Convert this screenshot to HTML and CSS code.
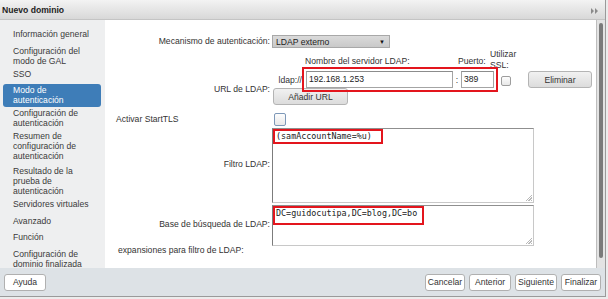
FILE: index.html
```html
<!DOCTYPE html>
<html lang="es">
<head>
  <meta charset="UTF-8" />
  <title>Nuevo dominio</title>
  <link rel="stylesheet" href="styles.css">
</head>
<body>
  <div class="dialog">
    <div class="titlebar">
      <span class="title">Nuevo dominio</span>
      <svg class="collapse" viewBox="0 0 8 6" width="8" height="6">
        <path d="M0 0 L3 3 L0 6 Z M4 0 L7 3 L4 6 Z" fill="#8a8a8a"/>
      </svg>
    </div>

    <div class="main">
      <ul class="nav">
        <li class="single">Información general</li>
        <li>Configuración del<br>modo de GAL</li>
        <li class="single">SSO</li>
        <li class="selected">Modo de<br>autenticación</li>
        <li>Configuración de<br>autenticación</li>
        <li>Resumen de<br>configuración de<br>autenticación</li>
        <li class="shift">Resultado de la<br>prueba de<br>autenticación</li>
        <li class="single">Servidores virtuales</li>
        <li class="single">Avanzado</li>
        <li class="single">Función</li>
        <li>Configuración de<br>dominio finalizada</li>
      </ul>

      <div class="content">
        <div class="form">
          <div class="lbl lbl-mech">Mecanismo de autenticación:</div>
          <div class="ctl">
            <div class="select"><span>LDAP externo</span><span class="caret">&#9660;</span></div>
          </div>

          <div class="lbl lbl-url">URL de LDAP:</div>
          <div class="ctl url">
            <div class="url-head">
              <span class="h-server">Nombre del servidor LDAP:</span>
              <span class="h-port">Puerto:</span>
              <span class="h-ssl">Utilizar<br>SSL:</span>
            </div>
            <div class="url-row">
              <span class="scheme">ldap://</span>
              <div class="hostport">
                <div class="input host">192.168.1.253</div>
                <span class="colon">:</span>
                <div class="input port">389</div>
              </div>
              <span class="check check-ssl"></span>
              <button class="btn btn-remove">Eliminar</button>
            </div>
            <button class="btn btn-add">Añadir URL</button>
          </div>

          <div class="lbl lbl-left">Activar StartTLS</div>
          <div class="ctl"><span class="check check-tls"></span></div>

          <div class="lbl lbl-mid">Filtro LDAP:</div>
          <div class="ctl">
            <div class="textarea ta-filter">
              <span class="mark mark-filter">(samAccountName=%u)</span>
              <span class="grip"></span>
            </div>
          </div>

          <div class="lbl lbl-mid">Base de búsqueda de LDAP:</div>
          <div class="ctl">
            <div class="textarea ta-base">
              <span class="mark mark-base">DC=guidocutipa,DC=blog,DC=bo</span>
              <span class="grip"></span>
            </div>
          </div>

          <div class="wide">expansiones para filtro de LDAP:</div>
        </div>
      </div>

      <div class="scrollbar"><div class="thumb"></div></div>
    </div>

    <div class="footer">
      <button class="btn">Ayuda</button>
      <div class="footer-right">
        <button class="btn btn-cancel">Cancelar</button>
        <button class="btn btn-prev">Anterior</button>
        <button class="btn btn-next">Siguiente</button>
        <button class="btn btn-finish">Finalizar</button>
      </div>
    </div>
  </div>
</body>
</html>
```

FILE: styles.css
```css
body {
  margin: 0;
  padding: 0;
  background: #ececec;
  font-family: 'Liberation Sans', Arial, sans-serif;
  font-size: 8.6px;
  color: #333;
  overflow: hidden;
}

.dialog {
  width: 605px;
  height: 296px;
  border-right: 1px solid #9a9a9a;
  border-bottom: 1px solid #9a9a9a;
  background: #fff;
  display: flex;
  flex-direction: column;
}

.titlebar {
  height: 20px;
  flex: none;
  display: flex;
  align-items: center;
  justify-content: space-between;
  padding: 0 6px 0 2px;
  background: linear-gradient(to bottom, #f3f3f3, #d8d8d8);
  border-bottom: 1px solid #c4c4c4;
  box-sizing: border-box;
}

.title {
  font-weight: bold;
  color: #222;
}

.collapse {
  margin-top: 2px;
}

.main {
  flex: 1;
  display: flex;
  min-height: 0;
}

/* left navigation */
.nav {
  width: 105px;
  flex: none;
  margin: 0;
  padding: 7.5px 0 0;
  list-style: none;
  background: #eeeff0;
  overflow: hidden;
}

.nav li {
  margin: 0 4px 0 3px;
  padding: 1.5px 0 1.5px 10px;
  line-height: 10px;
  color: #3a3a3a;
}

.nav li.single {
  padding-bottom: 5px;
}

.nav li.shift {
  margin-top: 2px;
}

.nav li.selected {
  background: #3e7db8;
  color: #fff;
  border-radius: 3px;
}

/* form */
.content {
  width: 492px;
  flex: none;
  background: #fff;
  border-right: 1px solid #bdbdbd;
  box-sizing: border-box;
  overflow: hidden;
}

.form {
  display: grid;
  grid-template-columns: 167px 1fr;
  padding-top: 15px;
}

.lbl {
  text-align: right;
  padding-right: 2px;
  line-height: 13px;
  white-space: nowrap;
}

.lbl-url {
  align-self: end;
  padding-bottom: 9px;
}

.lbl-left {
  text-align: left;
  padding-left: 11px;
  margin-top: 8px;
}

.lbl-mid {
  align-self: center;
}

.ctl {
  min-width: 0;
}

.select {
  width: 118px;
  height: 13px;
  box-sizing: border-box;
  display: flex;
  align-items: center;
  justify-content: space-between;
  padding: 0 4px 0 3px;
  background: linear-gradient(to bottom, #dadada, #c9c9c9);
  border: 1px solid #a8a8a8;
  color: #222;
}

.caret {
  font-size: 6px;
  color: #111;
}

.url {
  margin-top: 7px;
}

.url-head {
  height: 16px;
  display: flex;
  padding-left: 33px;
  line-height: 12px;
}

.h-server {
  width: 153px;
}

.h-port {
  width: 32px;
}

.h-ssl {
  margin-top: -6px;
  line-height: 11px;
  height: 12px;
}

.url-row {
  height: 17px;
  display: flex;
  align-items: center;
}

.scheme {
  width: 30px;
  text-align: right;
  padding-right: 4px;
}

.hostport {
  display: flex;
  align-items: center;
  outline: 2px solid #e3151d;
  outline-offset: 2px;
}

.input {
  height: 17px;
  box-sizing: border-box;
  border: 1px solid #a4a4a4;
  border-top-color: #8c8c8c;
  background: #fff;
  color: #222;
  padding-left: 2px;
  line-height: 15px;
}

.host {
  width: 147px;
}

.colon {
  width: 8px;
  text-align: center;
}

.port {
  width: 33px;
}

.check {
  display: inline-block;
  box-sizing: border-box;
  border-radius: 2px;
  background: linear-gradient(to bottom, #fdfdfd, #e8e8e8);
}

.check-ssl {
  width: 10px;
  height: 10px;
  margin: 3px 0 0 7px;
  border: 1px solid #9d9d9d;
}

.btn {
  font-family: inherit;
  font-size: 8.6px;
  color: #333;
  height: 17px;
  padding: 0;
  box-sizing: border-box;
  border: 1px solid #b4b4b4;
  border-radius: 3px;
  background: linear-gradient(to bottom, #fbfbfb, #e9e9e9);
}

.btn-remove {
  width: 64px;
  margin-left: 17px;
  background: linear-gradient(to bottom, #f1f1f1, #dcdcdc);
}

.btn-add {
  display: block;
  width: 75px;
  margin-left: 1px;
  background: linear-gradient(to bottom, #f1f1f1, #dcdcdc);
}

.check-tls {
  width: 12px;
  height: 13px;
  margin: 8px 0 0 2px;
  border: 1px solid #7d98b8;
  display: block;
}

.textarea {
  position: relative;
  width: 262px;
  box-sizing: border-box;
  margin-top: 2px;
  border: 1px solid #c8c8c8;
  border-top-color: #8f8f8f;
  border-left-color: #7c7c7c;
  background: #fff;
  font-family: 'DejaVu Sans Mono', 'Liberation Mono', monospace;
  font-size: 8.4px;
  color: #222;
}

.ta-filter {
  height: 75px;
}

.ta-base {
  height: 41px;
}

.mark {
  display: block;
  box-sizing: border-box;
  border: 2px solid #e3151d;
  padding-left: 1px;
  line-height: 10px;
}

.mark-filter {
  width: 110px;
  height: 15px;
}

.mark-base {
  width: 151px;
  height: 19px;
}

.grip {
  position: absolute;
  right: 1px;
  bottom: 1px;
  width: 7px;
  height: 7px;
  background: repeating-linear-gradient(135deg, transparent 0 1px, #b9b9b9 1px 2px);
  clip-path: polygon(100% 0, 100% 100%, 0 100%);
}

.wide {
  grid-column: 1 / 3;
  padding-left: 13px;
  line-height: 10px;
  margin-top: -1px;
}

/* scrollbar */
.scrollbar {
  flex: 1;
  background: #e3e3e3;
  padding: 3px 0 0 2px;
  box-sizing: border-box;
}

.thumb {
  width: 4px;
  height: 235px;
  border-radius: 2px;
  background: #7a7a7a;
}

/* footer */
.footer {
  height: 28px;
  flex: none;
  display: flex;
  align-items: center;
  justify-content: space-between;
  padding: 0 4px 0 4px;
  background: #dde2e6;
  box-sizing: border-box;
}

.footer .btn {
  background: #fff;
  border-color: #b0b0b0;
  height: 17px;
}

.footer > .btn {
  width: 42px;
}

.footer-right {
  display: flex;
  gap: 4px;
}

.btn-cancel { width: 40px; }
.btn-prev { width: 42px; }
.btn-next { width: 42px; }
.btn-finish { width: 40px; }
```
